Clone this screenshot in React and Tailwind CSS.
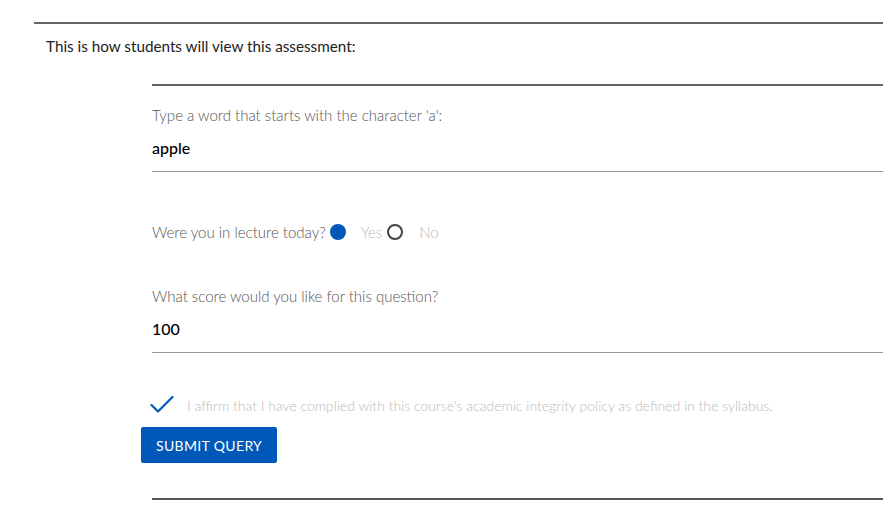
export default function App() {
  return (
    <div
      className="min-h-screen bg-white pl-[34px] pt-[22px]"
      style={{ fontFamily: "Lato, 'Noto Sans', sans-serif" }}
    >
      <div className="h-[2px] bg-[#666]" />
      <p className="pl-3 pt-3 text-[15.25px] leading-5 text-[#222]">
        This is how students will view this assessment:
      </p>

      <div className="pl-[118px] pt-[28px]">
        <div className="h-[2px] bg-[#666]" />

        <p className="mt-[19px] text-[15px] leading-5 font-light text-[#555]">
          Type a word that starts with the character 'a':
        </p>
        <p className="mt-[13px] text-[16px] leading-5 font-medium text-black">apple</p>
        <div className="mt-[13px] h-px bg-[#999]" />

        <div className="mt-[50px] flex h-5 items-center text-[15px] font-light">
          <span className="text-[#555]">Were you in lecture today?</span>
          <span className="ml-[4px] h-4 w-4 rounded-full bg-[#0059b8]" />
          <span className="ml-[15px] text-[#bbb]">Yes</span>
          <span className="ml-[5px] h-4 w-4 rounded-full border-2 border-[#444]" />
          <span className="ml-[16px] text-[#bbb]">No</span>
        </div>

        <p className="mt-[44px] text-[15px] leading-5 font-light text-[#555]">
          What score would you like for this question?
        </p>
        <p className="mt-[13px] text-[16px] leading-5 font-medium text-black">100</p>
        <div className="mt-[13px] h-px bg-[#999]" />

        <div className="-ml-[2px] mt-[42px] flex h-5 items-center">
          <svg width="24" height="20" viewBox="0 0 24 20" fill="none">
            <path d="M1.5 10 L8 16.5 L22.5 2" stroke="#0059b8" strokeWidth="2.2" strokeLinecap="round" strokeLinejoin="round" />
          </svg>
          <span className="ml-[13px] text-[14px] font-light text-[#bbb]">
            I affirm that I have complied with this course's academic integrity policy as defined in the syllabus.
          </span>
        </div>

        <button className="-ml-[11px] mt-3 h-9 rounded-[2px] bg-[#0059b8] px-[15px] text-[14px] tracking-[0.35px] text-white">
          SUBMIT QUERY
        </button>

        <div className="mt-[35px] h-[2px] bg-[#555]" />
      </div>
    </div>
  );
}
